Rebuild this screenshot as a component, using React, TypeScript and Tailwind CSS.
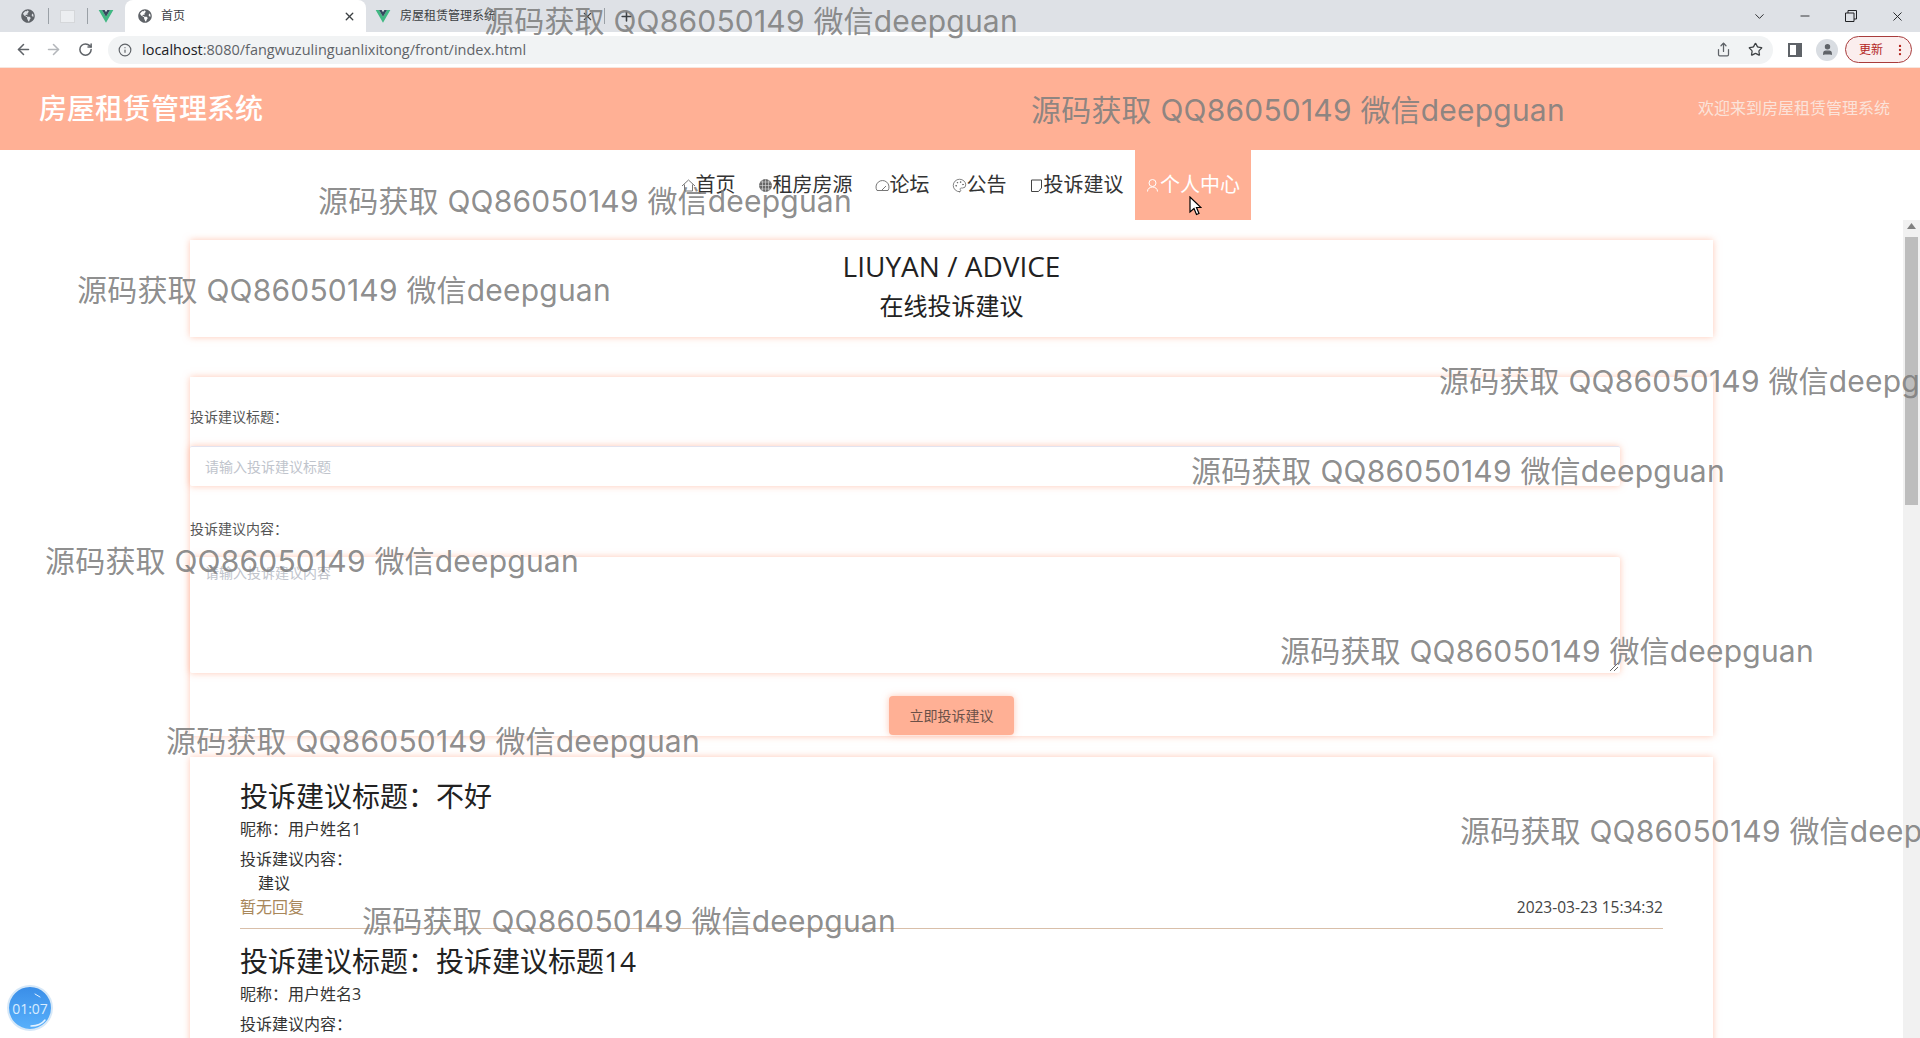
import { ArrowLeft, ArrowRight, RotateCw, Info, Star, ChevronDown, Minus, X, Plus, Palette, User, Share, EllipsisVertical } from 'lucide-react';
import { FaGlobeAmericas } from 'react-icons/fa';

const cardShadow = 'shadow-[0_0_7px_rgba(255,176,149,0.7)]';
const fontStack = '"Open Sans","Noto Sans CJK SC",sans-serif';

const watermarks = [
  [484, 21], [1031, 110], [318, 201], [77, 290], [1439, 381], [1191, 471],
  [45, 561], [1280, 651], [166, 741], [1460, 831], [362, 921],
];

function VueLogo({ size = 16 }: { size?: number }) {
  return (
    <svg width={size} height={size} viewBox="0 0 24 24" className="shrink-0">
      <path d="M1 3h5l6 10 6-10h5L12 22z" fill="#41b883" />
      <path d="M6 3h4l2 3.5L14 3h4l-6 10z" fill="#35495e" />
    </svg>
  );
}

function BrowserChrome() {
  return (
    <div className="shrink-0">
      <div className="h-8 bg-[#dee1e6] flex items-end text-[#3c4043]">
        <div className="h-8 w-[125px] shrink-0 flex items-center pl-[21px]">
          <FaGlobeAmericas size={14} color="#5f6368" />
          <div className="w-px h-4 bg-[#9aa0a6] ml-[13px]" />
          <div className="w-[15px] h-[13px] bg-[#eceef1] border border-[#d5d7da] ml-[11px]" />
          <div className="w-px h-4 bg-[#9aa0a6] ml-[12px]" />
          <div className="ml-[10px]"><VueLogo /></div>
        </div>
        <div className="h-8 w-[241px] shrink-0 bg-white rounded-t-lg flex items-center pl-[13px] pr-[10px]">
          <FaGlobeAmericas size={14} color="#5f6368" />
          <span className="text-[12px] ml-[9px] flex-1">首页</span>
          <X size={13} strokeWidth={2.5} />
        </div>
        <div className="h-8 w-[238px] shrink-0 flex items-center pl-[9px] pr-[10px]">
          <VueLogo />
          <span className="text-[12px] ml-[9px] flex-1 whitespace-nowrap overflow-hidden">房屋租赁管理系统</span>
          <X size={13} />
        </div>
        <div className="w-px h-4 bg-[#9aa0a6] mb-2" />
        <div className="h-8 flex items-center ml-[14px]"><Plus size={15} strokeWidth={2.5} /></div>
        <div className="flex-1" />
        <div className="h-8 flex items-center text-[#202124]">
          <div className="w-[46px] flex justify-center"><ChevronDown size={15} strokeWidth={1.5} /></div>
          <div className="w-[46px] flex justify-center"><Minus size={14} strokeWidth={1.5} /></div>
          <div className="w-[46px] flex justify-center">
            <svg width="12" height="12" viewBox="0 0 12 12" fill="none" stroke="currentColor">
              <path d="M.5 3h8.5v8.5H.5zM3 3V.5h8.5V9H9" />
            </svg>
          </div>
          <div className="w-[46px] flex justify-center"><X size={15} strokeWidth={1.5} /></div>
        </div>
      </div>
      <div className="h-9 bg-white flex items-center pl-[15px] pr-[8px] text-[#5f6368] border-b border-[#f6e6df]">
        <ArrowLeft size={17} strokeWidth={2.2} />
        <ArrowRight size={17} strokeWidth={2.2} className="ml-[13px] text-[#b4b7bb]" />
        <RotateCw size={15} strokeWidth={2.4} className="ml-[16px]" />
        <div className="ml-[15px] h-7 flex-1 bg-[#f1f3f4] rounded-full flex items-center pl-[10px] pr-[10px]">
          <Info size={14} />
          <span className="ml-[10px] text-[14.5px] text-[#5f6368]"><span className="text-[#202124]">localhost</span>:8080/fangwuzulinguanlixitong/front/index.html</span>
          <div className="flex-1" />
          <Share size={15} />
          <Star size={15} className="ml-[17px] text-[#3c4043]" />
        </div>
        <div className="ml-[15px] w-[14px] h-[14px] border-2 border-[#5f6368] border-r-[6px]" />
        <div className="ml-[14px] w-[22px] h-[22px] rounded-full bg-[#d9dde2] flex items-center justify-center">
          <User size={13} fill="#5f6368" />
        </div>
        <div className="ml-[7px] w-[67px] h-[27px] rounded-full border border-[#a83c3c] bg-[#fbeeee] flex items-center pl-[13px] text-[#b3261e]">
          <span className="text-[12px] flex-1">更新</span>
          <EllipsisVertical size={14} className="mr-[4px]" />
        </div>
      </div>
    </div>
  );
}

const navIcon = { width: 15, height: 15, viewBox: '0 0 15 15', fill: 'none', stroke: 'currentColor', strokeWidth: 1, className: 'shrink-0 text-[#777]' };

const navItems = [
  {
    label: '首页',
    icon: <svg {...navIcon}><path d="M1 8 7.5 2 14 8M3.5 6.5V13h8V6.5" /></svg>,
  },
  {
    label: '租房房源',
    icon: (
      <svg {...navIcon}>
        <circle cx="7.5" cy="7.5" r="6" fill="#666" />
        <path d="M1.5 7.5h12M3 4h9M3 11h9M7.5 1.5v12M4.5 2.5v10M10.5 2.5v10" stroke="#ddd" strokeWidth=".6" />
      </svg>
    ),
  },
  {
    label: '论坛',
    icon: <svg {...navIcon}><path d="M2 12.5A6.5 6.5 0 1 1 13 12.500z" /><path d="M7 12l4-4" /></svg>,
  },
  {
    label: '公告',
    icon: <Palette size={15} strokeWidth={1.3} className="shrink-0 text-[#666]" />,
  },
  {
    label: '投诉建议',
    icon: <svg {...navIcon} className="shrink-0 text-[#444]"><path d="M2.500 2h10v8l-3 3.500h-7z" /></svg>,
  },
];

function Nav() {
  return (
    <div className="h-[70px] shrink-0 flex justify-center">
      <div className="flex h-full text-[20px] text-[#333]">
        {navItems.map((n) => (
          <div key={n.label} className="px-[11px] h-full flex items-center">
            {n.icon}
            <span className="whitespace-nowrap">{n.label}</span>
          </div>
        ))}
        <div className="w-[116px] h-full bg-[#ffb095] text-white flex items-center justify-center">
          <svg {...navIcon} className="shrink-0 text-white"><circle cx="7.500" cy="5" r="3.500" /><path d="M2.500 13.500c0-6 10-6 10 0" /></svg>
          <span className="whitespace-nowrap">个人中心</span>
        </div>
      </div>
    </div>
  );
}

function Complaint({ title, name, body, date }: { title: string; name: string; body?: string; date?: string }) {
  return (
    <div>
      <div className="text-[28px] leading-[38px] text-[#222]">投诉建议标题：{title}</div>
      <div className="text-[16px] leading-[20px] text-[#333] mt-[4px]">昵称：{name}</div>
      <div className="text-[16px] leading-[20px] text-[#333] mt-[10px]">投诉建议内容：</div>
      {body && (
        <>
          <div className="text-[16px] leading-[24px] text-[#333] pl-[18px] mt-[2px]">{body}</div>
          <div className="flex items-center justify-between border-b border-[#d9bfa9] pb-[9px] mb-[13px]">
            <span className="text-[16px] leading-[24px] text-[#a8875a]">暂无回复</span>
            <span className="text-[15.5px] leading-[24px] text-[#444]">{date}</span>
          </div>
        </>
      )}
    </div>
  );
}

export default function App() {
  return (
    <div className="relative h-[1038px] w-[1920px] overflow-hidden flex flex-col bg-white" style={{ fontFamily: fontStack }}>
      <BrowserChrome />
      <div className="h-[82px] shrink-0 bg-[#ffb095] flex items-center justify-between pl-[39px] pr-[30px]">
        <span className="text-[28px] text-white font-medium -mt-[3px]">房屋租赁管理系统</span>
        <span className="text-[16px] text-[#fbe3da] -mt-[3px]">欢迎来到房屋租赁管理系统</span>
      </div>
      <Nav />
      <div className="flex-1 min-h-0 flex">
        <div className="flex-1 min-w-0 overflow-hidden">
          <div className={`ml-[190px] mt-[20px] h-[97px] w-[1523px] bg-white text-center ${cardShadow} pt-[7px]`}>
            <div className="text-[28px] leading-[38px] text-[#222]">LIUYAN / ADVICE</div>
            <div className="text-[24px] leading-[38px] mt-[2px] text-[#222]">在线投诉建议</div>
          </div>
          <div className={`ml-[190px] mt-[40px] h-[359px] w-[1523px] bg-white ${cardShadow}`}>
            <div className="pt-[31px] text-[14px] leading-[18px] text-[#555]">投诉建议标题：</div>
            <div className={`mt-[20px] h-[40px] w-[1430px] border-t border-[#e3e3ef] rounded-[2px] flex items-center pl-[15px] text-[14px] text-[#c0c4cc] ${cardShadow}`}>请输入投诉建议标题</div>
            <div className="mt-[34px] text-[14px] leading-[18px] text-[#555]">投诉建议内容：</div>
            <div className={`mt-[19px] h-[116px] w-[1430px] rounded-[2px] pl-[15px] pt-[7px] text-[14px] leading-[18px] text-[#c0c4cc] relative ${cardShadow}`}>
              请输入投诉建议内容
              <svg className="absolute right-[1px] bottom-[1px]" width="10" height="10" viewBox="0 0 10 10" stroke="#666" strokeWidth="1"><path d="M1 9 9 1M5 9 9 5" /></svg>
            </div>
            <div className="flex justify-center mt-[23px]">
              <div className={`w-[125px] h-[39px] bg-[#ffb095] rounded-[4px] flex items-center justify-center text-[14px] text-[#6b5048] ${cardShadow}`}>立即投诉建议</div>
            </div>
          </div>
          <div className={`ml-[190px] mt-[21px] w-[1523px] bg-white ${cardShadow} px-[50px] pt-[20px] h-[400px]`}>
            <Complaint title="不好" name="用户姓名1" body="建议" date="2023-03-23 15:34:32" />
            <Complaint title="投诉建议标题14" name="用户姓名3" />
          </div>
        </div>
        <div className="w-[17px] shrink-0 bg-[#f1f1f1] pt-[3px] flex flex-col items-center">
          <svg width="9" height="6" viewBox="0 0 9 6" className="mb-[8px]"><path d="M4.5 0 9 6H0z" fill="#808080" /></svg>
          <div className="w-[13px] h-[268px] bg-[#bdbdbd]" />
        </div>
      </div>
      {watermarks.map(([x, y]) => (
        <div key={`${x}-${y}`} className="absolute text-[30px] leading-[40px] tracking-[0.2px] text-[#7f7f7f]/90 whitespace-nowrap pointer-events-none" style={{ left: x, top: y - 20, fontFamily: 'Inter,"Noto Sans CJK SC",sans-serif' }}>
          源码获取 QQ86050149 微信deepguan
        </div>
      ))}
      <div className="absolute left-[7px] top-[985px] w-[46px] h-[46px] rounded-full bg-gradient-to-b from-[#3a8ee8] to-[#58b0fb] border-2 border-[#d6e8f8] flex items-center justify-center text-[14px] text-[#d8ecff]">
        01:07
        <svg className="absolute left-0 top-0" width="42" height="42" viewBox="0 0 42 42" fill="none" stroke="#e6f3ff" strokeLinecap="round">
          <path d="M26 7l5 3" strokeWidth="1" />
          <path d="M22 39c6 0 11-2 14-6" strokeWidth="1.500" />
        </svg>
      </div>
      <svg className="absolute left-[1189px] top-[196px]" width="13" height="20" viewBox="0 0 13 20">
        <path d="M1 1v15l4-3.500 2.500 6 2.500-1-2.500-6H12z" fill="white" stroke="black" strokeWidth="1.200" />
      </svg>
    </div>
  );
}
